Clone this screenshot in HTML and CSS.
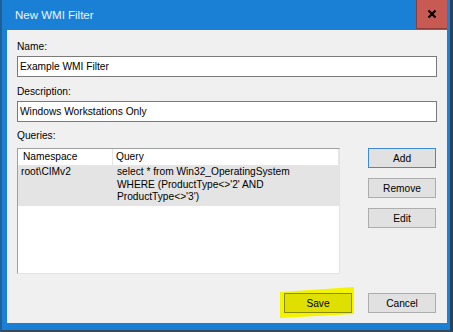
FILE: index.html
```html
<!DOCTYPE html>
<html lang="en">
<head>
  <meta charset="UTF-8" />
  <meta name="viewport" content="width=device-width, initial-scale=1" />
  <title>New WMI Filter</title>
  <link rel="stylesheet" href="styles.css">
</head>
<body>
  <div class="window">
    <div class="titlebar">
      <span class="title">New WMI Filter</span>
      <button class="close-btn" aria-label="Close">
        <svg width="10" height="10" viewBox="0 0 10 10">
          <path d="M1.5 1.5 L8.5 8.5 M8.5 1.5 L1.5 8.5" stroke="#000" stroke-width="2.1" fill="none" />
        </svg>
      </button>
    </div>

    <div class="client">
      <label class="label" for="filter-name">Name:</label>
      <input class="field" id="filter-name" type="text" value="Example WMI Filter">

      <label class="label spaced" for="filter-desc">Description:</label>
      <input class="field" id="filter-desc" type="text" value="Windows Workstations Only">

      <div class="label queries-label">Queries:</div>
      <div class="queries">
        <div class="list">
          <div class="list-head">
            <div class="cell">Namespace</div>
            <div class="cell">Query</div>
          </div>
          <div class="list-row selected">
            <div class="cell">root\CIMv2</div>
            <div class="cell">select * from Win32_OperatingSystem<br>WHERE (ProductType&lt;&gt;'2' AND<br>ProductType&lt;&gt;'3')</div>
          </div>
        </div>
        <div class="side-buttons">
          <button class="btn default">Add</button>
          <button class="btn">Remove</button>
          <button class="btn">Edit</button>
        </div>
      </div>

      <div class="footer">
        <span class="marker"><button class="btn save">Save</button></span>
        <button class="btn">Cancel</button>
      </div>
    </div>
  </div>
</body>
</html>
```

FILE: styles.css
```css
html, body {
  margin: 0;
  padding: 0;
  height: 100%;
  overflow: hidden;
  background: #2e3e4e;
  font-family: 'Liberation Sans', Arial, sans-serif;
  font-size: 10.2px;
  color: #000;
}

.window {
  width: 453px;
  height: 332px;
  box-sizing: border-box;
  display: flex;
  flex-direction: column;
  background: #1a80d6;
  border-left: 2px solid #1f5f98;
  border-right: 3px solid #2c4258;
  border-bottom: 2px solid #3b4856;
}

.titlebar {
  height: 30px;
  flex: none;
  display: flex;
  align-items: flex-start;
  padding: 0 3px 0 13px;
}

.title {
  flex: 1;
  line-height: 30px;
  font-size: 11.5px;
  color: #eef5fc;
}

.close-btn {
  width: 31px;
  height: 29px;
  padding: 0;
  border: none;
  border-left: 1px solid #8c3d37;
  border-bottom: 1px solid #8c3d37;
  background: #c75a52;
  display: flex;
  align-items: center;
  justify-content: center;
  cursor: pointer;
}

.client {
  flex: 1;
  margin: 0 3px 7px 5px;
  padding: 11px 10px 0 10px;
  background: #f0f0f0;
  display: flex;
  flex-direction: column;
}

.label {
  display: block;
  height: 12px;
  line-height: 12px;
}

.label.spaced {
  margin-top: 9px;
}

.label.queries-label {
  margin-top: 8px;
}

.field {
  margin-top: 3px;
  height: 21px;
  box-sizing: border-box;
  width: 100%;
  padding: 0 2px;
  border: 1px solid #7a7a7a;
  background: #fff;
  font: inherit;
  color: #000;
  outline: none;
}

.queries {
  margin-top: 6px;
  display: flex;
  align-items: flex-start;
}

.list {
  width: 323px;
  height: 126px;
  box-sizing: border-box;
  background: #fff;
  border: 1px solid #a0a0a0;
  border-right-color: #e3e3e3;
  border-bottom-color: #e3e3e3;
}

.list-head,
.list-row {
  display: grid;
  grid-template-columns: 95px 1fr;
}

.list-head {
  height: 16px;
  line-height: 16px;
  border-bottom: 1px solid #e5e5e5;
}

.list-head .cell {
  padding-left: 5px;
  border-right: 1px solid #e5e5e5;
}

.list-head .cell + .cell {
  padding-left: 3px;
}

.list-row {
  line-height: 12.5px;
  padding-bottom: 2px;
}

.list-row .cell {
  padding-left: 3px;
}

.list-row .cell + .cell {
  padding-left: 4px;
}

.list-row.selected {
  background: #e4e4e4;
}

.side-buttons {
  margin-left: auto;
  margin-right: 1px;
  display: flex;
  flex-direction: column;
  gap: 10px;
}

.btn {
  width: 68px;
  height: 20px;
  padding: 0;
  box-sizing: border-box;
  border: 1px solid #adadad;
  background: #e1e1e1;
  font: inherit;
  color: #000;
  cursor: pointer;
}

.btn.default {
  border-color: #3d8ad5;
}

.footer {
  margin-top: 19px;
  margin-right: 1px;
  display: flex;
  justify-content: flex-end;
  gap: 16px;
}

.marker {
  position: relative;
  display: block;
}

/* yellow highlighter stroke behind the Save button */
.marker::before {
  content: "";
  position: absolute;
  left: -4px;
  top: -6px;
  width: 74px;
  height: 31px;
  background: #f4f400;
  clip-path: polygon(0 5px, 100% 0, 100% 27px, 0 100%);
}

.btn.save {
  position: relative;
  background: #dfdf00;
  border-color: #8a8a00;
}
```
